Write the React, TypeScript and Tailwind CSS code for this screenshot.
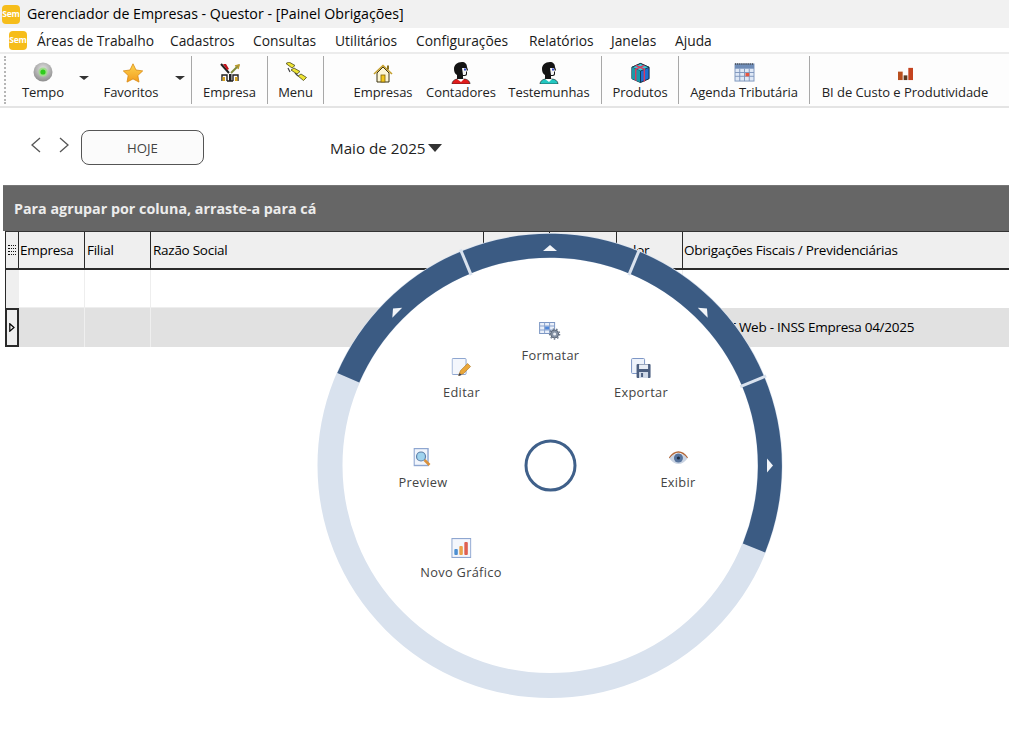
import React from "react";

const UI = "font-['Open_Sans','Noto_Sans',sans-serif]";

function Logo() {
  return (
    <div className="w-[18px] h-[19px] rounded-[4px] bg-[#f6bd1a] flex items-center justify-center overflow-hidden shrink-0">
      <span className="text-[8.5px] font-bold leading-none text-white tracking-[-0.2px]">Sem</span>
    </div>
  );
}

const IconTempo = () => (
  <svg width="22" height="20" viewBox="0 0 22 20" className="-mt-[2px]">
    <defs>
      <radialGradient id="tempoG" cx="50%" cy="35%" r="65%">
        <stop offset="0%" stopColor="#e4e4e4" />
        <stop offset="100%" stopColor="#8d8d8d" />
      </radialGradient>
    </defs>
    <circle cx="11" cy="10" r="9.500" fill="url(#tempoG)" />
    <circle cx="11" cy="10" r="4.500" fill="#9fdc8c" />
    <circle cx="11" cy="10" r="2.600" fill="#2fcb1c" />
  </svg>
);
const IconStar = () => (
  <svg width="22" height="20" viewBox="0 0 22 20" className="ml-[3px] -mt-[1px]">
    <defs>
      <linearGradient id="starG" x1="0" y1="0" x2="0" y2="1">
        <stop offset="0%" stopColor="#fdd54f" />
        <stop offset="100%" stopColor="#f39c1e" />
      </linearGradient>
    </defs>
    <path d="M11 .8l3 6.200 6.700.9-4.900 4.600 1.200 6.600-6-3.200-6 3.200 1.200-6.600L1.300 7.900 8 7z" fill="url(#starG)" stroke="#d98a12" strokeWidth="0.8" />
  </svg>
);
const IconEmpresa = () => (
  <svg width="22" height="20" viewBox="0 0 22 20" fill="none">
    <path d="M2 1l8 9" stroke="#222" strokeWidth="2" />
    <path d="M4 1h3l3 5-2 1z" fill="#c1141b" />
    <path d="M20 2l-8 8" stroke="#7f8a3a" strokeWidth="2" />
    <path d="M16 3l4-1-1 4" stroke="#b99a2e" strokeWidth="1.500" />
    <path d="M3 18v-6h5v6M8 18h6M14 18v-6h5v6" stroke="#222" strokeWidth="1.400" />
    <rect x="10" y="11" width="2.500" height="7" fill="#222" />
    <rect x="3.500" y="14" width="2.500" height="4" fill="#d9a520" />
    <rect x="16" y="14" width="2.500" height="4" fill="#d9a520" />
  </svg>
);
const IconMenu = () => (
  <svg width="22" height="19" viewBox="0 0 22 19" fill="none" className="-mt-[3px]">
    <path d="M3 6l2 4M10 11l3 3" stroke="#444" strokeWidth="1.200" />
    <path d="M1 1.500L4 0l6 3.500L7 6z" fill="#eee433" stroke="#4a4a1c" strokeWidth=".8" />
    <path d="M6 8l3-2 6 3.500-3 2.500z" fill="#eee433" stroke="#4a4a1c" strokeWidth=".8" />
    <path d="M13 14l3-2 5.500 3.500-3 3z" fill="#eee433" stroke="#4a4a1c" strokeWidth=".8" />
  </svg>
);
const IconHouse = () => (
  <svg width="20" height="19" viewBox="0 0 20 19" fill="none">
    <path d="M4 9v9h12V9L10 3z" fill="#fdf6d4" stroke="#3d3412" strokeWidth="1" />
    <path d="M1 10l9-8.500 9 8.500" stroke="#c49e2a" strokeWidth="1.600" />
    <rect x="8" y="11" width="4" height="7" fill="#f3c81c" stroke="#7a5f10" strokeWidth=".8" />
    <rect x="14" y="1.500" width="2" height="4" fill="#8a7324" />
  </svg>
);
const Person = ({ shirt }: { shirt: string }) => (
  <svg width="22" height="22" viewBox="0 0 22 22">
    <path d="M2 22c0-3 3-5 6-5h6c3 0 6 2 6 5z" fill={shirt} stroke="#222" strokeWidth=".6" />
    <path d="M7 17h7l-3 3z" fill="#fff" />
    <path d="M4 7c0-4 3-7 8-7 3 0 5 2 5 5l1 3-1 1v3c0 2-2 2-4 2v3H7v-4C5 12 4 10 4 7z" fill="#141414" />
    <path d="M12 6h4l1 3-1 1v2c0 1-2 1-3 1z" fill="#f4f4f4" />
    <rect x="14" y="6.500" width="2" height="2" fill="#2b45c8" />
  </svg>
);
const IconBox = () => (
  <svg width="21" height="22" viewBox="0 0 22 22">
    <path d="M11 1l9 4v12l-9 4-9-4V5z" fill="#1e6fd0" stroke="#123" strokeWidth="1" />
    <path d="M2 5l9 4 9-4-9-4z" fill="#3fc7d6" stroke="#123" strokeWidth=".8" />
    <path d="M2 5l9 4v12l-9-4z" fill="#1b9aa8" />
    <path d="M6 3l9 4v13M15 3L6 7v12" stroke="#e2355a" strokeWidth="1.400" fill="none" />
    <path d="M11 9v12" stroke="#123" strokeWidth=".8" />
  </svg>
);
const IconCalendar = () => (
  <svg width="21" height="19" viewBox="0 0 22 20" className="-mt-[2px]">
    <rect x="1" y="1" width="20" height="18" fill="#dfe8f6" stroke="#7e97bd" />
    <rect x="1" y="1" width="20" height="5" fill="#6f8db8" />
    <path d="M1 1h20" stroke="#444" strokeWidth="1.500" strokeDasharray="1 1" />
    <path d="M6 6v13M11 6v13M16 6v13M1 10h20M1 14h20" stroke="#7e97bd" strokeWidth="1" />
    <rect x="12" y="10.500" width="4" height="3.500" fill="#e8543f" />
  </svg>
);
const IconBI = () => (
  <svg width="17" height="15" viewBox="0 0 18 16">
    <rect x="1" y="6" width="5" height="9" fill="#b9501f" />
    <rect x="7" y="10" width="4" height="5" fill="#5a3a22" />
    <rect x="12" y="2" width="5" height="13" fill="#c4431f" />
  </svg>
);

type TB =
  | { k: "btn"; w: number; label: string; icon: React.ReactNode }
  | { k: "arrow"; w: number }
  | { k: "gap"; w: number }
  | { k: "sep" };

const tools: TB[] = [
  { k: "btn", w: 70, label: "Tempo", icon: <IconTempo /> },
  { k: "arrow", w: 12 },
  { k: "btn", w: 82, label: "Favoritos", icon: <IconStar /> },
  { k: "arrow", w: 16 },
  { k: "gap", w: 3 },
  { k: "sep" },
  { k: "btn", w: 75, label: "Empresa", icon: <IconEmpresa /> },
  { k: "sep" },
  { k: "btn", w: 55, label: "Menu", icon: <IconMenu /> },
  { k: "sep" },
  { k: "gap", w: 23 },
  { k: "btn", w: 72, label: "Empresas", icon: <IconHouse /> },
  { k: "btn", w: 84, label: "Contadores", icon: <Person shirt="#e01b1b" /> },
  { k: "btn", w: 92, label: "Testemunhas", icon: <Person shirt="#22c7c0" /> },
  { k: "gap", w: 6 },
  { k: "sep" },
  { k: "btn", w: 76, label: "Produtos", icon: <IconBox /> },
  { k: "sep" },
  { k: "btn", w: 130, label: "Agenda Tributária", icon: <IconCalendar /> },
  { k: "sep" },
  { k: "btn", w: 190, label: "BI de Custo e Produtividade", icon: <IconBI /> },
];

function Toolbar() {
  return (
    <div className="h-[56px] flex items-stretch bg-[#fdfdfd] border-t-2 border-[#ececec] border-b-2 border-b-[#e4e4e4] pl-[4px]">
      <div className="w-[4px] my-[2px] border-l-2 border-dotted border-[#b5b5b5]" />
      {tools.map((t, i) => {
        if (t.k === "sep") return <div key={i} className="w-px bg-[#a8a8a8] my-[2px] shrink-0" />;
        if (t.k === "gap") return <div key={i} className="shrink-0" style={{ width: t.w }} />;
        if (t.k === "arrow")
          return (
            <div key={i} className="shrink-0 flex items-center justify-center pb-[4px]" style={{ width: t.w }}>
              <div className="w-0 h-0 border-l-[5px] border-r-[5px] border-t-[4px] border-l-transparent border-r-transparent border-t-[#333]" />
            </div>
          );
        return (
          <div key={i} className="shrink-0 flex flex-col items-center" style={{ width: t.w }}>
            <div className="h-[24px] mt-[7px] flex items-center justify-center">{t.icon}</div>
            <span className="text-[13px] leading-[17px] mt-[-1px] text-[#222] whitespace-nowrap tracking-[-0.05px]">{t.label}</span>
          </div>
        );
      })}
    </div>
  );
}

const cols = [
  { w: 66, label: "Empresa", p: "pl-[1px]" },
  { w: 66, label: "Filial", p: "pl-[2px]" },
  { w: 333, label: "Razão Social", p: "pl-[2px]" },
  { w: 66, label: "Comp.", p: "pl-[1px]" },
  { w: 67, label: "Venc.", p: "pl-[1px]" },
  { w: 66, label: "Valor", p: "pl-[1px]" },
];

function Grid() {
  return (
    <div className="pl-[5px] text-[13.5px] text-black tracking-[-0.26px]">
      <div className="h-[39px] flex border-b-2 border-[#2a2a2a] bg-[#efefef] border-t border-t-[#333] box-border">
        <div className="w-[14px] border-x border-[#2a2a2a] shrink-0 flex flex-col justify-center items-center gap-px">
          <div className="w-[8px] h-[2px] border-t border-dotted border-[#111]" />
          <div className="w-[8px] h-[2px] border-t border-dotted border-[#111]" />
          <div className="w-[8px] h-[2px] border-t border-dotted border-[#111]" />
          <div className="w-[8px] h-[2px] border-t border-dotted border-[#111]" />
        </div>
        {cols.map((c) => (
          <div key={c.label} className={`shrink-0 border-r border-[#2a2a2a] flex items-center overflow-hidden whitespace-nowrap ${c.p}`} style={{ width: c.w }}>
            {c.label}
          </div>
        ))}
        <div className="flex-1 pl-[1px] flex items-center whitespace-nowrap">Obrigações Fiscais / Previdenciárias</div>
      </div>
      <div className="h-[38px] flex">
        <div className="w-[14px] bg-[#efefef] border-l border-[#2a2a2a] shrink-0" />
        {cols.map((c) => (
          <div key={c.label} className="shrink-0 border-r border-[#eeeeee] border-b border-b-[#eeeeee]" style={{ width: c.w }} />
        ))}
        <div className="flex-1" />
      </div>
      <div className="h-[39px] flex bg-[#e1e1e1]">
        <div className="w-[14px] bg-[#efefef] border-2 border-[#2a2a2a] shrink-0 flex items-center justify-center">
          <svg width="6" height="9" viewBox="0 0 6 9" fill="none">
            <path d="M.8 .8L5 4.500 .8 8.200z" stroke="#000" strokeWidth="1.200" />
          </svg>
        </div>
        {cols.map((c) => (
          <div key={c.label} className="shrink-0 border-r border-[#efefef]" style={{ width: c.w }} />
        ))}
        <div className="flex-1 pl-[21px] flex items-center whitespace-nowrap">DCTF Web - INSS Empresa 04/2025</div>
      </div>
    </div>
  );
}

const CX = 550;
const CY = 465.5;
const R = 220;
function pt(deg: number, r: number = R) {
  const a = ((deg - 90) * Math.PI) / 180;
  return `${(CX + r * Math.cos(a)).toFixed(2)} ${(CY + r * Math.sin(a)).toFixed(2)}`;
}
function arc(a: number, b: number) {
  return `M${pt(a)} A${R} ${R} 0 0 1 ${pt(b)}`;
}

function Ring() {
  const seams = [-22.5, 22.5, 67.5];
  const tris: Array<[number, number]> = [
    [-45, 217],
    [0, 215.5],
    [45, 217],
    [90, 218],
  ];
  return (
    <svg className="absolute left-0 top-0 pointer-events-none" width="1009" height="749" viewBox="0 0 1009 749">
      <circle cx={CX} cy={CY} r={232} fill="#ffffff" />
      <circle cx={CX} cy={CY} r={R} fill="none" stroke="#d9e2ee" strokeWidth="25" />
      <path d={arc(-66.5, 112)} fill="none" stroke="#3b5b83" strokeWidth="24" />
      {seams.map((s) => (
        <path key={s} d={`M${pt(s, 206)} L${pt(s, 234)}`} stroke="#d9e2ee" strokeWidth="3" />
      ))}
      {tris.map(([a, r]) => (
        <g key={a} transform={`rotate(${a} ${CX} ${CY})`}>
          <path d={`M${CX} ${CY - r - 5} l7 6 h-14 z`} fill="#f2f5f9" />
        </g>
      ))}
      <circle cx={CX + 0.5} cy={CY} r={24.500} fill="#fff" stroke="#3f608a" strokeWidth="3" />
    </svg>
  );
}

const IconFormat = () => (
  <svg width="22" height="18" viewBox="0 0 22 18">
    <rect x=".5" y=".5" width="15" height="11" fill="#eaf0fa" stroke="#7d97c4" />
    <path d="M.5 4h15M.5 8h15M5.500.5v11M10.500.5v11" stroke="#8aa3cd" strokeWidth="1" />
    <rect x="6" y="4.500" width="4" height="3" fill="#4f86d8" />
    <circle cx="15.500" cy="12" r="4" fill="#8793a5" stroke="#5b6675" strokeWidth="1" />
    <circle cx="15.500" cy="12" r="1.500" fill="#eef1f5" />
    <circle cx="15.500" cy="12" r="5" fill="none" stroke="#6e7a8c" strokeWidth="1.400" strokeDasharray="1.500 2" />
  </svg>
);
const IconEdit = () => (
  <svg width="20" height="20" viewBox="0 0 20 20">
    <rect x=".5" y=".5" width="14" height="16" rx="1" fill="#f3f6fc" stroke="#8ea6d0" />
    <path d="M7 17.500l2-5 7-7 3 3-7 7z" fill="#eaa73a" stroke="#a8701f" strokeWidth=".6" />
    <path d="M7 18l1-3 2 2z" fill="#2d3a55" />
  </svg>
);
const IconExport = () => (
  <svg width="20" height="20" viewBox="0 0 20 20">
    <rect x=".5" y=".5" width="13" height="15" rx="1" fill="#eef3fb" stroke="#7e97c6" />
    <rect x="5.500" y="6" width="14" height="14" rx="1" fill="#4c5f80" />
    <rect x="8" y="6.500" width="9" height="4.500" fill="#e8edf5" />
    <rect x="8" y="14" width="9" height="6" fill="#cfd9e8" />
    <rect x="10" y="15" width="2" height="4" fill="#4c5f80" />
  </svg>
);
const IconPreview = () => (
  <svg width="18" height="20" viewBox="0 0 18 20">
    <rect x=".5" y=".5" width="14" height="17" fill="#f1f5fc" stroke="#8ea6d0" strokeWidth="1.400" />
    <circle cx="7.500" cy="8.500" r="4.500" fill="#9fd3ee" stroke="#5d7fa8" strokeWidth="1.200" />
    <path d="M11 12l5 5" stroke="#d9913b" strokeWidth="2.600" />
  </svg>
);
const IconEye = () => (
  <svg width="20" height="14" viewBox="0 0 20 14">
    <path d="M1 7c3-4.500 6-6 9-6s6 1.500 9 6" fill="none" stroke="#b4683a" strokeWidth="1.400" />
    <path d="M1 7.500c3-4 6-5 9-5s6 1 9 5c-3 4-6 5.500-9 5.500s-6-1.500-9-5.500z" fill="#c9d3e2" />
    <circle cx="10" cy="7" r="4.500" fill="#56739c" />
    <circle cx="10" cy="7" r="1.600" fill="#1e2c42" />
  </svg>
);
const IconChart = () => (
  <svg width="20" height="20" viewBox="0 0 20 20">
    <rect x=".5" y=".5" width="19" height="19" fill="#f3f6fc" stroke="#8ea6d0" strokeWidth="1.200" />
    <rect x="3" y="11" width="3.500" height="6" rx="1" fill="#4d8fd1" />
    <rect x="8" y="8" width="3.500" height="9" rx="1" fill="#eba24a" />
    <rect x="13" y="4" width="3.500" height="13" rx="1" fill="#df5f50" />
  </svg>
);

const radial: Array<{ label: string; x: number; y: number; icon: React.ReactNode }> = [
  { label: "Formatar", x: 550.5, y: 321, icon: <IconFormat /> },
  { label: "Editar", x: 461.5, y: 358, icon: <IconEdit /> },
  { label: "Exportar", x: 641, y: 358, icon: <IconExport /> },
  { label: "Preview", x: 423, y: 448, icon: <IconPreview /> },
  { label: "Exibir", x: 678, y: 448, icon: <IconEye /> },
  { label: "Novo Gráfico", x: 461, y: 538, icon: <IconChart /> },
];

const menu = [
  { w: 133, label: "Áreas de Trabalho" },
  { w: 83, label: "Cadastros" },
  { w: 82, label: "Consultas" },
  { w: 81, label: "Utilitários" },
  { w: 113, label: "Configurações" },
  { w: 82, label: "Relatórios" },
  { w: 64, label: "Janelas" },
  { w: 50, label: "Ajuda" },
];

export default function App() {
  return (
    <div className={`relative w-[1009px] h-[749px] overflow-hidden bg-white ${UI}`}>
      <div className="h-[28px] bg-[#f1f1f1] flex items-center pl-[2px] gap-[7px]">
        <Logo />
        <span className="text-[14.2px] text-black whitespace-nowrap">Gerenciador de Empresas - Questor - [Painel Obrigações]</span>
      </div>
      <div className="h-[24px] bg-white flex items-center pl-[9px]">
        <Logo />
        <div className="flex ml-[10px] pt-[2px] text-[13.8px] text-[#1a1a1a] whitespace-nowrap">
          {menu.map((m) => (
            <span key={m.label} className="shrink-0" style={{ width: m.w }}>
              {m.label}
            </span>
          ))}
        </div>
      </div>
      <Toolbar />
      <div className="h-[77px] flex items-start pt-[22px]">
        <svg className="ml-[30px] mt-[6px]" width="12" height="18" viewBox="0 0 12 18" fill="none">
          <path d="M10 2L2 9l8 7" stroke="#555" strokeWidth="1.300" />
        </svg>
        <svg className="ml-[16px] mt-[6px]" width="12" height="18" viewBox="0 0 12 18" fill="none">
          <path d="M2 2l8 7-8 7" stroke="#555" strokeWidth="1.300" />
        </svg>
        <div className="ml-[11px] w-[123px] h-[35px] rounded-[8px] border border-[#555] bg-[#fbfbfb] flex items-center justify-center pt-[3px] text-[13.2px] text-[#444]">HOJE</div>
        <div className="ml-[126px] mt-[7px] flex items-center gap-[2px] text-[15.2px] text-[#222] leading-[22px] whitespace-nowrap">
          <span>Maio de 2025</span>
          <div className="w-0 h-0 border-l-[7.5px] border-r-[7.5px] border-t-[8px] border-l-transparent border-r-transparent border-t-[#333]" />
        </div>
      </div>
      <div className="ml-[3px] h-[46px] bg-[#666666] border-t border-[#777] flex items-center pl-[11px] pt-[1px]">
        <span className="text-[14.3px] font-bold text-[#ececec] whitespace-nowrap">Para agrupar por coluna, arraste-a para cá</span>
      </div>
      <Grid />
      <Ring />
      {radial.map((r) => (
        <div key={r.label} className="absolute -translate-x-1/2 flex flex-col items-center" style={{ left: r.x, top: r.y }}>
          <div className="h-[20px] flex items-center">{r.icon}</div>
          <span className="mt-[6px] text-[12.8px] leading-[17px] tracking-[0.3px] text-[#444] whitespace-nowrap">{r.label}</span>
        </div>
      ))}
    </div>
  );
}
